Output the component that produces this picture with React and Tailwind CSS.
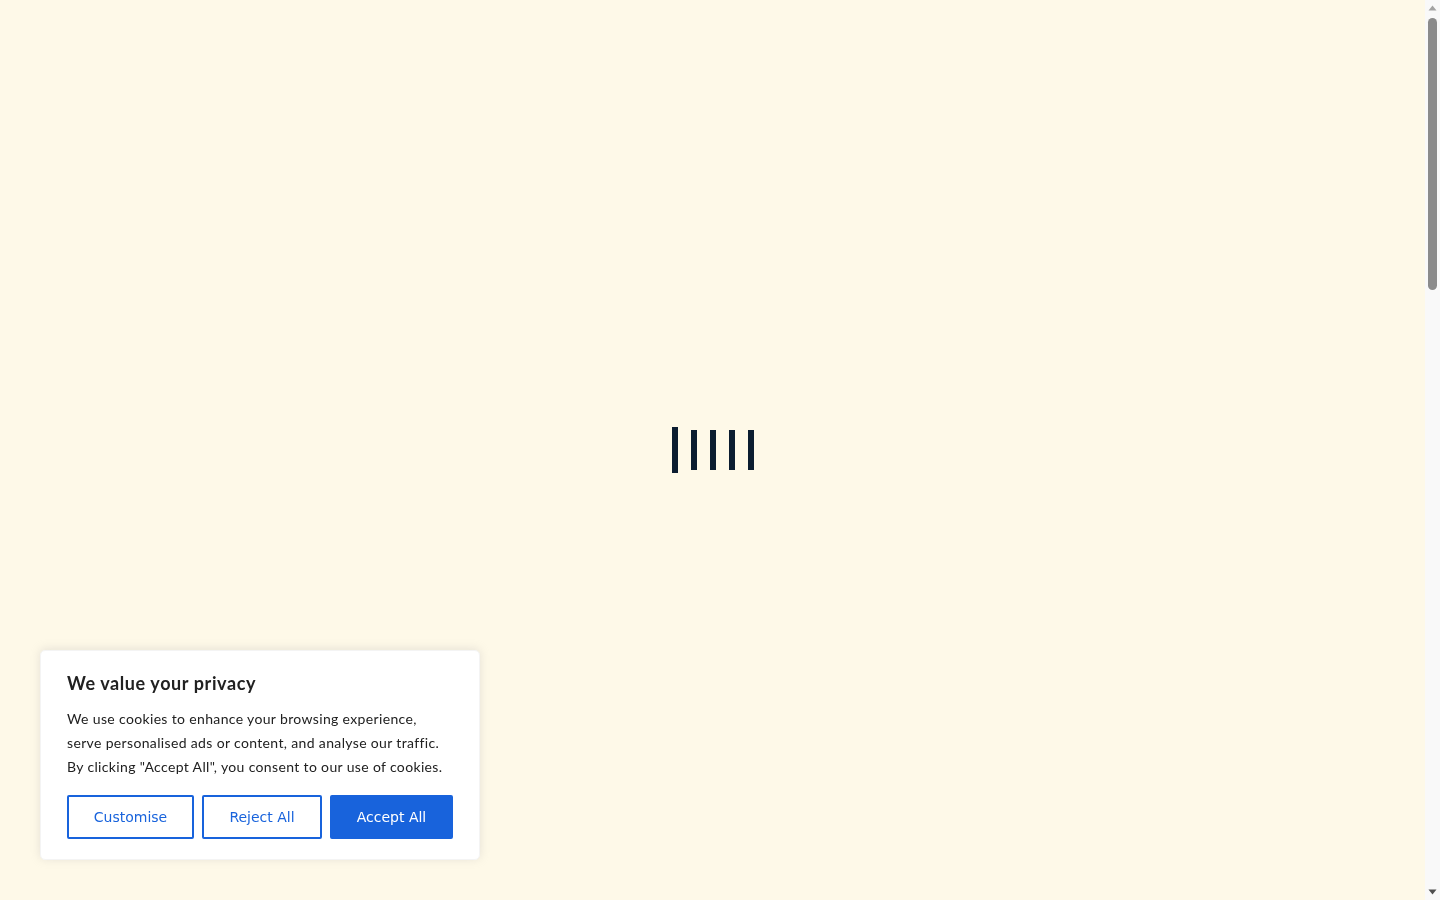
import React from 'react';

// Loader bars: first one animates taller in the reference frame
const BARS = ['h-[46px]', 'h-[40px]', 'h-[40px]', 'h-[40px]', 'h-[40px]'];

function Loader() {
  return (
    <div className="flex items-center justify-center gap-[13px] h-[900px]">
      {BARS.map((h, i) => (
        <span key={i} className={`block w-[6px] ${h} bg-[#0b1d30]`} />
      ))}
    </div>
  );
}

function ScrollTrack() {
  return (
    <div className="w-[15px] h-screen shrink-0 bg-[#f9f9f9] flex flex-col items-center">
      <svg width="15" height="15" viewBox="0 0 15 15" className="shrink-0">
        <path d="M3.5 10.5 L7.5 5.5 L11.5 10.5 Z" fill="#a3a3a3" />
      </svg>
      <div className="mt-[3px] w-[9px] h-[272px] rounded-full bg-[#8b8b8b]" />
      <div className="flex-1" />
      <svg width="15" height="15" viewBox="0 0 15 15" className="shrink-0">
        <path d="M3.5 4.5 L11.5 4.5 L7.5 9.5 Z" fill="#505050" />
      </svg>
    </div>
  );
}

function CookieBanner() {
  return (
    <div className="fixed left-[40px] bottom-[40px] w-[440px] bg-white border border-[#f4f4f4] rounded-[5px] shadow-[0_-1px_10px_0_rgba(172,171,171,0.3)] px-[26px] pt-[20px] pb-[20px]">
      <h2 className="text-[18px] leading-[24px] font-bold text-[#212121] font-['Lato','Noto_Sans',sans-serif] tracking-[0.6px]">
        We value your privacy
      </h2>
      <p className="mt-[12px] text-[14px] leading-[24px] text-[#212121] font-['Lato','Noto_Sans',sans-serif] tracking-[0.35px]">
        We use cookies to enhance your browsing experience,<br />
        serve personalised ads or content, and analyse our traffic.<br />
        By clicking "Accept All", you consent to our use of cookies.
      </p>
      <div className="mt-[16px] flex gap-[8px] font-['DejaVu_Sans',sans-serif] text-[14px]">
        <button type="button" className="w-[127px] h-[44px] border-2 border-[#1863dc] text-[#1863dc] bg-transparent rounded-[2px]">
          Customise
        </button>
        <button type="button" className="w-[120px] h-[44px] border-2 border-[#1863dc] text-[#1863dc] bg-transparent rounded-[2px]">
          Reject All
        </button>
        <button type="button" className="w-[123px] h-[44px] border-2 border-[#1863dc] bg-[#1863dc] text-white rounded-[2px]">
          Accept All
        </button>
      </div>
    </div>
  );
}

export default function App() {
  return (
    <div className="flex h-screen bg-[#fef9e8]">
      <main className="flex-1 overflow-y-auto">
        <div className="min-h-[2880px]">
          <Loader />
        </div>
      </main>
      <ScrollTrack />
      <CookieBanner />
    </div>
  );
}
